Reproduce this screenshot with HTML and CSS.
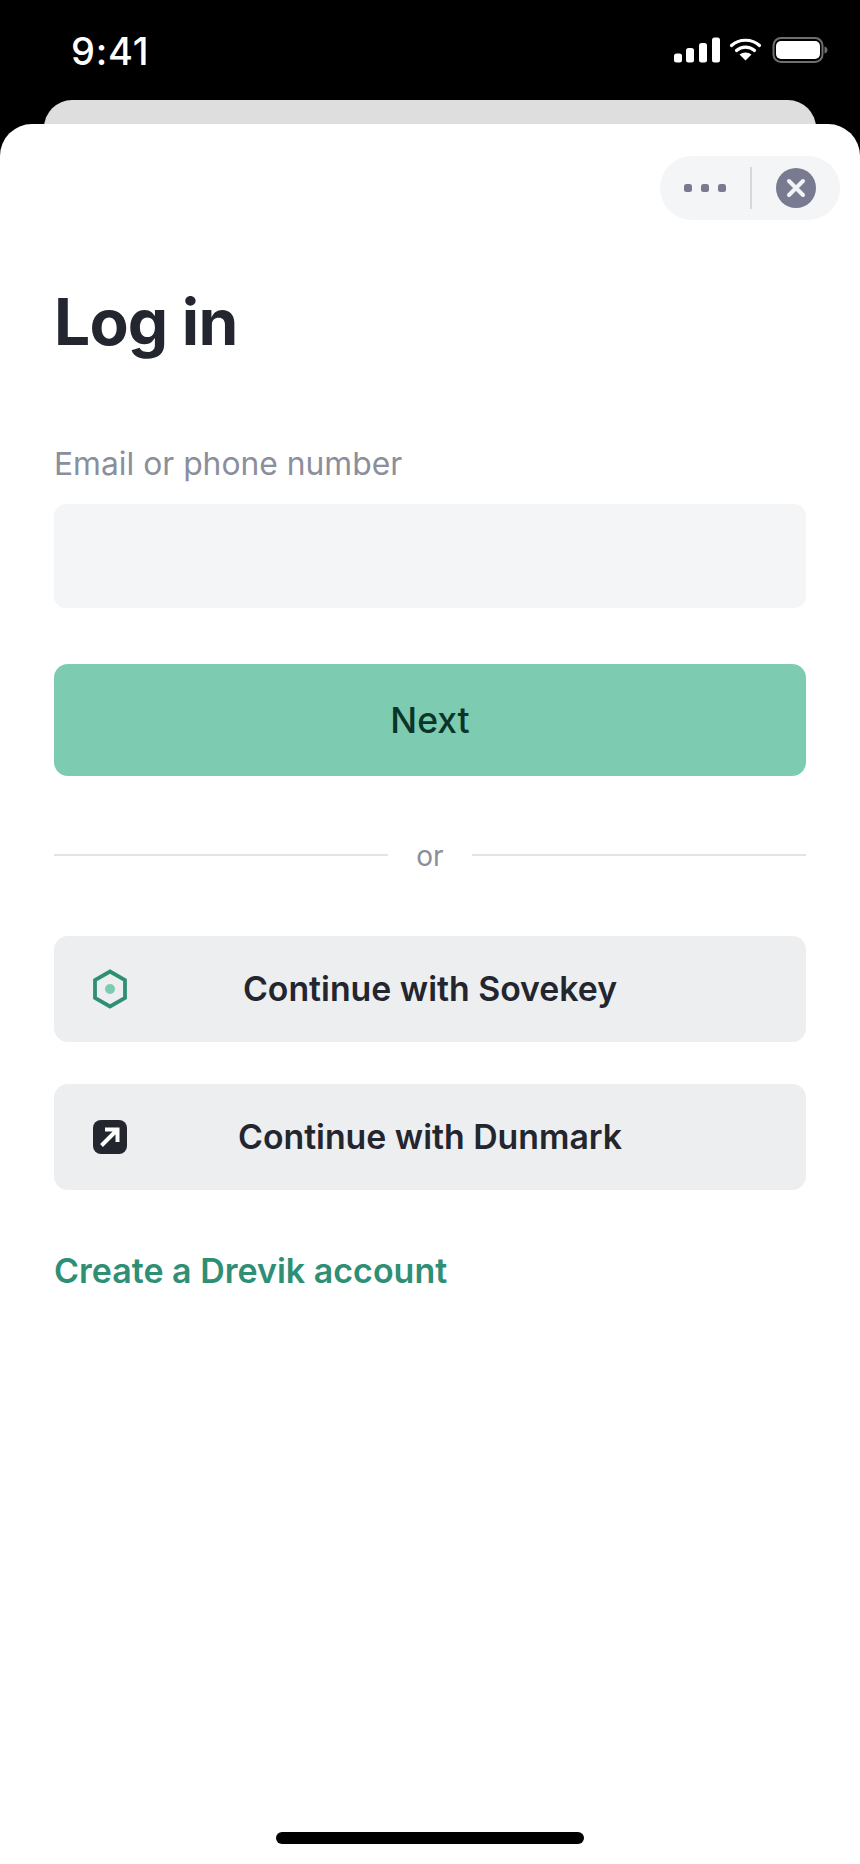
FILE: index.html
```html
<!DOCTYPE html>
<html lang="en">
<head>
<meta charset="utf-8">
<title>Log in</title>
<link rel="stylesheet" href="styles.css">
</head>
<body>
<div class="screen">
  <header class="status">
    <span class="time">9:41</span>
    <svg class="status-icons" width="156" height="28" viewBox="0 0 156 28">
      <rect x="2" y="16.5" width="8" height="9" rx="2.5" fill="#fff"/>
      <rect x="14" y="11" width="8" height="14.5" rx="2.5" fill="#fff"/>
      <rect x="27" y="6" width="8" height="19.500" rx="2.5" fill="#fff"/>
      <rect x="40" y="0.500" width="8" height="25" rx="2.5" fill="#fff"/>
      <path d="M59.500 8.500C67 1.500 80 1.500 87.500 8.500" fill="none" stroke="#fff" stroke-width="3.200" stroke-linecap="round"/>
      <path d="M64.500 13.500C69.500 9 77.500 9 82.500 13.500" fill="none" stroke="#fff" stroke-width="3.200" stroke-linecap="round"/>
      <path d="M73.500 23.500L67.500 17.500C71 14.800 76 14.800 79.500 17.500Z" fill="#fff"/>
      <rect x="101.500" y="1" width="49" height="24" rx="7.500" fill="none" stroke="#6f6f6f" stroke-width="2"/>
      <rect x="104" y="4" width="44" height="18" rx="5" fill="#fff"/>
      <path d="M152.500 9.500C154.500 10 155.500 11.500 155.500 13S154.500 16 152.500 16.500Z" fill="#6f6f6f"/>
    </svg>
  </header>
  <div class="behind"></div>
  <main class="sheet">
    <div class="sheet-top">
      <div class="pill">
        <span class="dots"><i></i><i></i><i></i></span>
        <span class="pill-rule"></span>
        <svg class="close" width="40" height="40" viewBox="0 0 40 40">
          <circle cx="20" cy="20" r="20" fill="#787b90"/>
          <path d="M13 13L27 27M27 13L13 27" stroke="#f3f4f8" stroke-width="4" stroke-linecap="round"/>
        </svg>
      </div>
    </div>
    <h1 class="title">Log in</h1>
    <label class="label" for="login">Email or phone number</label>
    <div class="input" id="login"></div>
    <button class="next" type="button">Next</button>
    <div class="or"><span class="or-line"></span><span class="or-text">or</span><span class="or-line"></span></div>
    <button class="alt alt-first" type="button">
      <svg class="alt-icon" width="36" height="40" viewBox="0 0 36 40">
        <path d="M18 2.500L33 11V29L18 37.500L3 29V11Z" fill="none" stroke="#2f8f74" stroke-width="3.800"/>
        <circle cx="18" cy="20" r="5" fill="#7dcbb0"/>
      </svg>
      <span>Continue with Sovekey</span>
    </button>
    <button class="alt" type="button">
      <svg class="alt-icon" width="36" height="36" viewBox="0 0 36 36">
        <rect x="1" y="1" width="34" height="34" rx="8" fill="#23252f"/>
        <path d="M9.500 26.500L25 11M13 10.500H25.500V23" fill="none" stroke="#fff" stroke-width="4"/>
      </svg>
      <span>Continue with Dunmark</span>
    </button>
    <a class="create" href="#">Create a Drevik account</a>
    <div class="home"></div>
  </main>
</div>
</body>
</html>
```
FILE: styles.css
```css
* { box-sizing: border-box; }
html, body { margin: 0; padding: 0; }
body {
  width: 860px;
  height: 1864px;
  background: #000;
  font-family: Inter, "Liberation Sans", sans-serif;
  overflow: hidden;
}
.screen { display: flex; flex-direction: column; height: 1864px; }
.status {
  height: 100px;
  flex: none;
  display: flex;
  justify-content: space-between;
  align-items: flex-start;
  padding: 29px 32px 0 71px;
}
.time { color: #fff; font-size: 38px; font-weight: 500; line-height: 44px; letter-spacing: 0.8px; }
.status-icons { margin-top: 8px; }
.behind {
  flex: none;
  height: 60px;
  margin: 0 44px -36px 44px;
  background: #dedede;
  border-radius: 28px 28px 0 0;
}
.sheet {
  position: relative;
  flex: 1;
  background: #fff;
  border-radius: 32px 32px 0 0;
  padding: 0 54px;
  display: flex;
  flex-direction: column;
}
.sheet-top { display: flex; justify-content: flex-end; padding-top: 32px; margin-right: -34px; }
.pill {
  width: 180px;
  height: 64px;
  border-radius: 32px;
  background: #f4f5f6;
  display: flex;
  align-items: center;
  padding-left: 24px;
}
.dots { display: flex; gap: 9px; width: 43px; }
.dots i { width: 8px; height: 8px; border-radius: 2.500px; background: #787b90; }
.pill-rule { width: 1.500px; height: 42px; background: #d6d7da; margin: 0 24px 0 23px; }
.close { flex: none; }
.title {
  margin: 63px 0 0;
  font-size: 64px;
  line-height: 78px;
  font-weight: 700;
  letter-spacing: -0.8px;
  color: #23252f;
}
.label { display: block; margin-top: 83px; font-size: 31.800px; line-height: 40px; color: #8b8e9b; }
.input { margin-top: 20px; height: 104px; border-radius: 12px; background: #f3f5f6; }
.next {
  margin-top: 56px;
  height: 112px;
  padding: 2px 0 0;
  border: 0;
  border-radius: 14px;
  background: #7dcbb0;
  color: #0b3528;
  font: 500 35.500px/40px Inter, "Liberation Sans", sans-serif;
}
.or { display: flex; align-items: center; gap: 28px; margin-top: 64px; height: 32px; }
.or-line { flex: 1; height: 2px; background: #e3e4e7; margin-top: -2px; }
.or-text { color: #8b8e9b; font-size: 28px; line-height: 32px; }
.alt {
  position: relative;
  display: flex;
  align-items: center;
  justify-content: center;
  height: 106px;
  margin-top: 42px;
  border: 0;
  border-radius: 14px;
  background: #eceef0;
  color: #23252f;
  font: 600 33.800px/40px Inter, "Liberation Sans", sans-serif;
}
.alt-first { margin-top: 64px; }
.alt-icon { position: absolute; left: 38px; top: 50%; transform: translateY(-50%); }
.create {
  margin-top: 61px;
  color: #2f8f74;
  font-size: 34px;
  line-height: 40px;
  font-weight: 600;
  text-decoration: none;
}
.home {
  position: absolute;
  left: 276px;
  top: 1708px;
  width: 308px;
  height: 12px;
  border-radius: 6px;
  background: #000;
}
```
